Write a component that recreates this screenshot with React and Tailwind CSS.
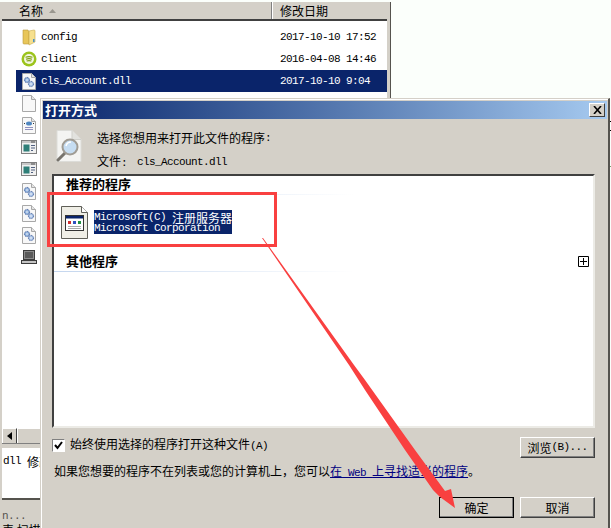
const Lat = ({ children }) => (
  <span className="font-['Liberation_Mono',monospace] text-[11px] tracking-[-0.6px] whitespace-pre">{children}</span>
);

const FolderIcon = () => (
  <svg width="16" height="18" viewBox="0 0 16 18">
    <path d="M2 2h5l1 2v12H3q-1 0-1-1z" fill="#e8c65a" stroke="#b9973a" strokeWidth="0.6" />
    <path d="M8 3l5-1q1 0 1 1v11l-6 3z" fill="#f6e08e" stroke="#c7a94c" strokeWidth="0.6" />
    <rect x="12" y="11" width="1.5" height="3" fill="#4a90c8" />
  </svg>
);

const ClientIcon = () => (
  <svg width="16" height="16" viewBox="0 0 16 16">
    <circle cx="8" cy="8" r="7.5" fill="#9cc41c" />
    <circle cx="8" cy="8" r="5" fill="#f4f7e4" />
    <path d="M4.5 6.3q3.5-1.3 7 0M5 8.2q3-1 6 0M5.6 10q2.4-.7 4.8 0" fill="none" stroke="#7e9f14" strokeWidth="1.2" />
  </svg>
);

const Page = ({ children }) => (
  <svg width="14" height="17" viewBox="0 0 14 17">
    <path d="M.5.5h9l4 4v12H.5z" fill="#f8f8f8" stroke="#a8a8a8" />
    <path d="M9.5.5v4h4" fill="#e4e4e4" stroke="#a8a8a8" />
    {children}
  </svg>
);

const DllIcon = () => (
  <Page>
    <circle cx="5" cy="7" r="2.6" fill="#8fb0dc" stroke="#3c5a96" strokeDasharray="1 .7" />
    <circle cx="9" cy="11" r="2.6" fill="#a9c2e6" stroke="#3c5a96" strokeDasharray="1 .7" />
    <circle cx="5" cy="7" r="0.8" fill="#fff" />
    <circle cx="9" cy="11" r="0.8" fill="#fff" />
  </Page>
);

const WebIcon = () => (
  <Page>
    <ellipse cx="7" cy="6.5" rx="3" ry="2" fill="#4f86c0" />
    <path d="M3 6.5l-1 0M11 6.5l1 0" stroke="#333" />
    <path d="M3 10.5h8M3 12.5h8" stroke="#9090c0" />
  </Page>
);

const WinIcon = () => (
  <svg width="16" height="14" viewBox="0 0 16 14">
    <rect x=".5" y=".5" width="15" height="13" fill="#f0f0f0" stroke="#808080" />
    <rect x="1" y="1" width="14" height="2" fill="#c8c8c8" />
    <rect x="10" y="1.5" width="4" height="1" fill="#505050" />
    <rect x="2.5" y="4.5" width="6" height="7" fill="#2f7f78" />
    <path d="M10 5.5h4M10 8h4M10 10.5h2" stroke="#506080" />
  </svg>
);

const PcIcon = () => (
  <svg width="16" height="16" viewBox="0 0 16 16">
    <rect x="2.5" y="1.5" width="11" height="9" fill="#8c8c8c" stroke="#3c3c3c" />
    <rect x="4" y="3" width="8" height="6" fill="#5a5a5a" />
    <rect x=".5" y="11.5" width="15" height="3" fill="#c4c4c4" stroke="#3c3c3c" />
  </svg>
);

const LookupIcon = () => (
  <svg width="26" height="32" viewBox="0 0 26 32">
    <path d="M1 .5h15l9 9v22H1z" fill="#f4f4f2" stroke="#dcdcd8" />
    <path d="M16 .5v9h9" fill="#e2e2de" stroke="#cfcfca" />
    <path d="M9 23l-7 7" stroke="#77736c" strokeWidth="3" strokeLinecap="round" />
    <circle cx="14" cy="17" r="7.5" fill="#c6ddf2" stroke="#a09c94" strokeWidth="2" />
    <path d="M10 16q1-4 5-4" fill="none" stroke="#fff" strokeWidth="1.5" />
  </svg>
);

const AppIcon = () => (
  <svg width="27" height="33" viewBox="0 0 27 33">
    <path d="M.5.5h20l6 6v26H.5z" fill="#efeee6" stroke="#5f5f58" />
    <path d="M20.5.5v6h6" fill="#fff" stroke="#5f5f58" />
    <rect x="4.5" y="9.5" width="18" height="15" fill="#fff" stroke="#333" />
    <rect x="5" y="10" width="17" height="2.5" fill="#0a246a" />
    <rect x="7" y="15" width="3" height="3" fill="#d03030" />
    <rect x="12" y="15" width="3" height="3" fill="#3050c0" />
    <rect x="17" y="15" width="3" height="3" fill="#209040" />
    <path d="M7 20.5h13M7 22.5h13" stroke="#aaa" />
  </svg>
);

const rows = [
  { icon: <FolderIcon />, name: 'config', date: '2017-10-10 17:52' },
  { icon: <ClientIcon />, name: 'client', date: '2016-04-08 14:46' },
  { icon: <DllIcon />, name: 'cls_Account.dll', date: '2017-10-10 9:04', selected: true },
  { icon: <Page /> },
  { icon: <WebIcon /> },
  { icon: <WinIcon /> },
  { icon: <WinIcon /> },
  { icon: <DllIcon /> },
  { icon: <DllIcon /> },
  { icon: <DllIcon /> },
  { icon: <PcIcon /> },
];

const Explorer = () => (
  <div className="absolute left-0 top-0 w-[391px] h-[528px] pt-[2px]">
    <div className="h-full bg-[#d4d0c8] border-r-[1.5px] border-[#55534e] pl-[2px] pr-[3px] flex flex-col">
      {/* column header */}
      <div className="h-[17px] flex items-center text-[12px] text-black shrink-0">
        <div className="w-[270px] pl-[17px] flex items-center gap-[6px] border-r border-[#808080]">
          <span>名称</span>
          <svg width="7" height="4" viewBox="0 0 7 4"><path d="M0 4l3.5-4 3.5 4z" fill="#9a978f" /></svg>
        </div>
        <div className="pl-[7px] border-l border-white">修改日期</div>
      </div>
      <div className="h-[2px] bg-[#404040] shrink-0" />

      {/* file list */}
      <div className="h-[407px] bg-white pt-[5px] shrink-0">
        {rows.map((r, i) => (
          <div key={i} className={`h-[22px] ml-[14px] flex items-center text-[12px] leading-[14px] ${r.selected ? 'bg-[#0a246a] text-white' : 'text-black'}`}>
            <div className="w-[24px] pl-[1px] flex items-center justify-center">{r.icon}</div>
            <div className="w-[240px] pl-[1px] flex items-center"><Lat>{r.name}</Lat></div>
            <div className="flex items-center"><Lat>{r.date}</Lat></div>
          </div>
        ))}
      </div>

      {/* scroll bar */}
      <div className="h-[16px] flex shrink-0 border-b border-[#808080]">
        <div className="w-[15px] flex items-center justify-center bg-[#d4d0c8] border-t border-l border-white border-r border-r-[#404040]">
          <svg width="5" height="8" viewBox="0 0 5 8"><path d="M5 0L0 4l5 4z" fill="#000" /></svg>
        </div>
        <div className="flex-1 border-t border-l border-white" />
      </div>
      <div className="h-[4px] shrink-0" />

      {/* details pane */}
      <div className="h-[50px] bg-white pt-[5px] pl-[1px] text-[12px] text-black shrink-0 flex items-start">
        <Lat>dll </Lat><span>修改</span>
      </div>
      <div className="h-[2px] bg-[#55534e] shrink-0" />
      <div className="pt-[7px] text-[12px] leading-[13px] text-[#55534e]">
        <div><Lat>n...</Lat></div>
        <div className="text-black whitespace-nowrap">表 扫描</div>
      </div>
    </div>
  </div>
);

const Btn = ({ children, isDefault }) => (
  <button className={`w-[75px] h-[21px] bg-[#d4d0c8] text-[12px] text-black border-t border-l border-t-white border-l-white border-r border-b border-r-[#404040] border-b-[#404040] shadow-[inset_-1px_-1px_0_#808080] flex items-center justify-center ${isDefault ? 'outline outline-1 outline-black -outline-offset-1' : ''}`}>
    {children}
  </button>
);

const Dialog = () => (
  <div className="absolute left-[40px] top-[98px] w-[570px] h-[430px] bg-[#d4d0c8] border-t border-l border-[#d4d0c8] border-r-2 border-r-[#55534e] text-[12px] text-black">
    <div className="h-full border-t border-l border-white pt-[1px] pl-[1px] flex flex-col">
      <div className="h-[18px] mr-[1px] flex items-center justify-between pl-[2px] pr-[2px] bg-gradient-to-r from-[#0a246a] to-[#a6caf0] shrink-0">
        <span className="text-white text-[13px] font-bold leading-none -mt-[2px]">打开方式</span>
        <div className="w-[16px] h-[14px] bg-[#d4d0c8] border-t border-l border-white border-r border-b border-r-[#404040] border-b-[#404040] flex items-center justify-center">
          <svg width="9" height="8" viewBox="0 0 9 8"><path d="M1 0l7 8M8 0L1 8" stroke="#000" strokeWidth="1.6" fill="none" /></svg>
        </div>
      </div>

      {/* intro */}
      <div className="h-[55px] flex pl-[13px] pt-[11px] shrink-0">
        <div className="w-[41px]"><LookupIcon /></div>
        <div className="-mt-[4px]">
          <div className="h-[24px] flex items-center">选择您想用来打开此文件的程序<Lat>:</Lat></div>
          <div className="h-[24px] flex items-center"><span className="w-[40px]">文件<Lat>:</Lat></span><Lat>cls_Account.dll</Lat></div>
        </div>
      </div>

      {/* program list */}
      <div className="h-[254px] ml-[9px] mr-[13px] bg-white border-t-2 border-l-2 border-[#404040] border-r-2 border-r-[#ecebe6] border-b-2 border-b-[#ecebe6] shrink-0">
        <div className="h-[18px] pl-[12px] text-[13px] font-bold leading-[16px]">推荐的程序</div>
        <div className="h-[1px] bg-gradient-to-r from-[#c4d6ee] to-white w-[300px]" />
        <div className="h-[56px] flex pl-[7px] pt-[11px]">
          <AppIcon />
          <div className="ml-[6px] mt-[4px] h-[24px] w-[138px] pt-[1px] bg-[#0a246a] text-white whitespace-nowrap leading-[11px]">
            <div className="h-[12px] flex items-center"><Lat>Microsoft(C) </Lat>注册服务器</div>
            <div className="h-[11px] flex items-center"><Lat>Microsoft Corporation</Lat></div>
          </div>
        </div>
        <div className="flex items-center justify-between pl-[12px] pr-[4px] h-[20px] text-[13px] font-bold leading-[16px]">
          <span>其他程序</span>
          <svg width="11" height="11" viewBox="0 0 11 11"><path d="M.5.5h10v10H.5zM5.5 2v7M2 5.5h7" fill="#fff" stroke="#000" /></svg>
        </div>
        <div className="h-[1px] bg-gradient-to-r from-[#c4d6ee] to-white w-[300px]" />
      </div>

      {/* options */}
      <div className="flex items-center justify-between ml-[9px] mr-[13px] mt-[9px] h-[21px] shrink-0">
        <label className="flex items-center gap-[5px] -mt-[5px]">
          <span className="w-[13px] h-[13px] bg-white border-t border-l border-[#808080] border-r border-b border-r-white border-b-white flex items-center justify-center">
            <svg width="9" height="9" viewBox="0 0 9 9"><path d="M1 4l2.5 3L8 1" fill="none" stroke="#000" strokeWidth="2" /></svg>
          </span>
          <span>始终使用选择的程序打开这种文件<Lat>(A)</Lat></span>
        </label>
        <Btn>浏览<Lat>(B)...</Lat></Btn>
      </div>
      <div className="ml-[11px] mt-[5px] leading-[16px] h-[16px] whitespace-nowrap shrink-0">
        如果您想要的程序不在列表或您的计算机上，您可以
        <span className="text-[#000080] underline">在<Lat> Web </Lat>上寻找适当的程序</span>。
      </div>
      <div className="flex justify-end gap-[6px] mr-[13px] mt-[18px] shrink-0">
        <Btn isDefault>确定</Btn>
        <Btn>取消</Btn>
      </div>
    </div>
  </div>
);

export default function App() {
  return (
    <div className="relative w-[611px] h-[528px] overflow-hidden bg-[#fbfffb] font-['Noto_Sans_CJK_SC','Liberation_Sans',sans-serif]">
      <Explorer />
      <Dialog />

      {/* bits of the window behind, right of the dialog */}
      <div className="absolute left-[610px] top-[121px] w-[1px] h-[1px] bg-black" />
      <div className="absolute left-[610px] top-[130px] w-[1px] h-[1px] bg-black" />
      <div className="absolute left-[610px] top-[166px] w-[1px] h-[1px] bg-[#7fa070]" />

      {/* screenshot annotations */}
      <div className="absolute left-[47px] top-[192px] w-[230px] h-[55px] border-[3px] border-[#f94040]" />
      <svg className="absolute left-0 top-0 pointer-events-none" width="611" height="528" viewBox="0 0 611 528">
        <polygon points="262,238 263,238 354,365 365,380 415,450 445,491 451,489 455,508 440,497 433,490 405,450 365,390 349,365" fill="#f94040" />
      </svg>
    </div>
  );
}
